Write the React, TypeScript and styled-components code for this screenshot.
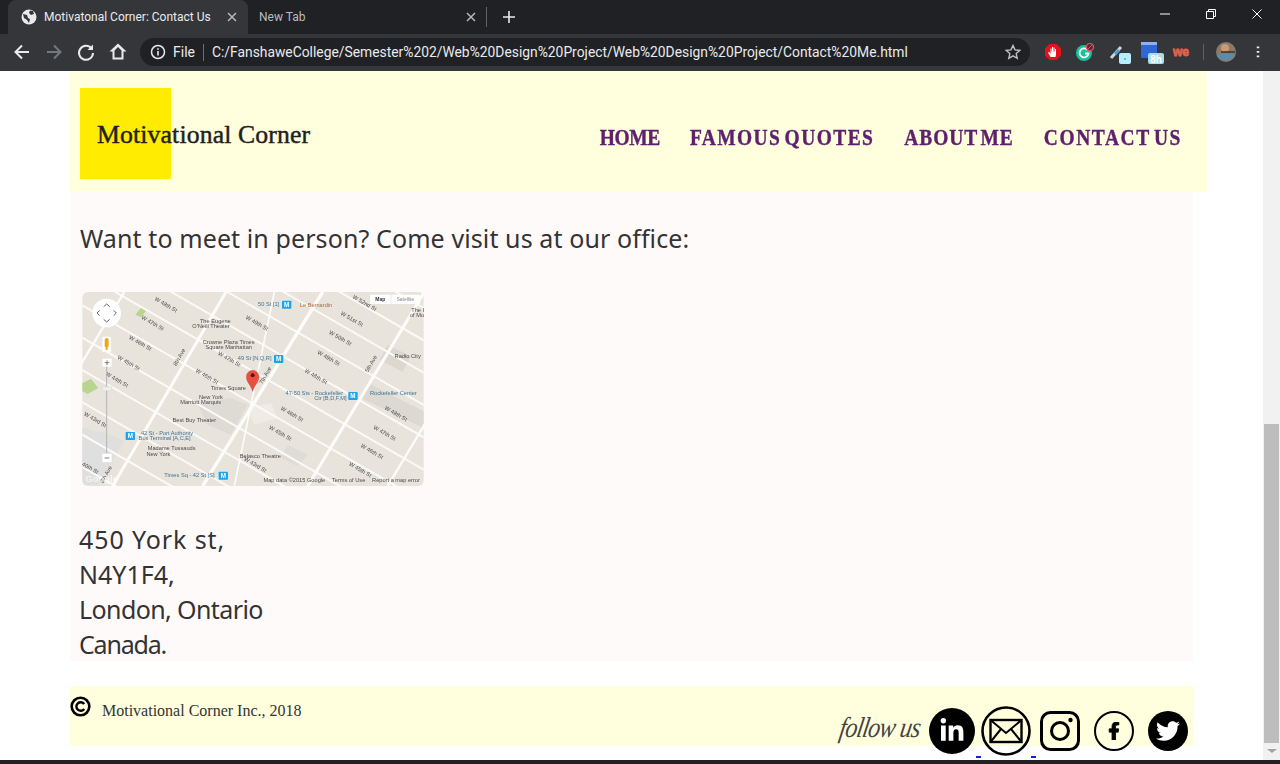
import React from "react";
import styled, { createGlobalStyle } from "styled-components";
import { FaLinkedinIn, FaFacebookF, FaTwitter } from "react-icons/fa";

const Global = createGlobalStyle`
  html, body { margin: 0; padding: 0; height: 100%; overflow: hidden; background: #fff; }
  #root { height: 764px; width: 1280px; }
  * { box-sizing: border-box; }
`;

const Page = styled.div`
  width: 1280px; height: 764px; display: flex; flex-direction: column; overflow: hidden;
`;
const TabStrip = styled.div`
  height: 34px; background: #202124; display: flex; align-items: flex-end; padding-left: 8px; flex: none;
  font: 12px "Roboto", "Liberation Sans", sans-serif;
`;
const ActiveTab = styled.div`
  width: 240px; height: 34px; background: #35363a; border-radius: 8px 8px 0 0; color: #e8eaed;
  display: flex; align-items: center; padding-left: 13px; gap: 7px;
`;
const InactiveTab = styled.div`
  width: 238px; height: 34px; color: #b9bcc0; display: flex; align-items: center; padding-left: 11px;
`;
const TabTitle = styled.span`
  flex: 1; white-space: nowrap;
`;
const TabClose = styled.svg<{ $mr: number }>`
  width: 10px; height: 10px; margin-right: ${p => p.$mr}px; flex: none;
`;
const TabDivider = styled.div`
  width: 1px; height: 20px; background: #5f6368; margin: 0 0 7px 0;
`;
const NewTab = styled.svg`
  width: 12px; height: 12px; margin: 0 0 11px 16px;
`;
const WindowControls = styled.div`
  margin-left: auto; display: flex; align-items: center; height: 34px; padding: 0 18px 6px 0; gap: 36px;
`;
const Toolbar = styled.div`
  height: 37px; background: #35363a; display: flex; align-items: center; flex: none; padding-bottom: 1px;
`;
const NavIcon = styled.svg<{ $ml: number }>`
  width: 20px; height: 20px; margin-left: ${p => p.$ml}px; flex: none;
`;
const Omnibox = styled.div`
  width: 890px; height: 28px; border-radius: 14px; background: #202124; margin-left: 12px;
  display: flex; align-items: center; padding-left: 10px; color: #e8eaed;
  font: 14px "Roboto", "Liberation Sans", sans-serif; flex: none;
`;
const FileLabel = styled.span`
  margin-left: 7px; color: #e8eaed;
`;
const OmniDivider = styled.div`
  width: 1px; height: 17px; background: #6b6e72; margin: 0 8px;
`;
const Url = styled.span`
  flex: 1; white-space: nowrap; font-size: 13.85px;
`;
const StarIcon = styled.svg`
  width: 16px; height: 16px; flex: none; margin-right: 9px;
`;
const InfoIcon = styled.svg`
  width: 16px; height: 16px; flex: none;
`;
const FaviconIcon = styled.svg`
  width: 16px; height: 16px; flex: none;
`;
const ExtIcon = styled.svg<{ $ml: number }>`
  width: 24px; height: 24px; margin-left: ${p => p.$ml}px; flex: none;
`;
const ToolbarDivider = styled.div`
  width: 1px; height: 16px; background: #5f6368; margin-left: 10px;
`;
const Viewport = styled.div`
  height: 689px; display: flex; flex: none; overflow: hidden; background: #fff;
`;
const Content = styled.div`
  width: 1263px; padding-left: 70px; flex: none; overflow: hidden;
`;
const Header = styled.header`
  width: 1137px; height: 121px; background: #ffffdd; display: flex; align-items: flex-start;
  justify-content: space-between; padding: 17px 25px 0 10px;
`;
const Logo = styled.div`
  width: 91px; height: 91px; background: #ffec00; display: flex; align-items: center; padding: 2px 0 0 17px;
  font: 400 25.7px "Liberation Serif", serif; color: #1f1f1f; white-space: nowrap; -webkit-text-stroke: 0.45px #1f1f1f;
  letter-spacing: 0.15px;
`;
const NavBar = styled.nav`
  display: flex; gap: 30px; margin-top: 37px;
`;
const NavLink = styled.a<{ $ls: number }>`
  font: 700 19.5px/26px "Liberation Serif", serif; color: #5e1f6e; white-space: nowrap;
  letter-spacing: ${p => p.$ls}px; word-spacing: -3px; transform: scaleY(1.2);
  -webkit-text-stroke: 0.35px #5e1f6e;
`;
const Main = styled.main`
  width: 1123px; height: 469px; background: #fffafa; padding: 28px 0 0 10px; color: #333;
  font-family: "Noto Sans", "Open Sans", sans-serif; font-size: 25px;
`;
const Lead = styled.p`
  margin: 0; line-height: 36px; white-space: nowrap; letter-spacing: 0.1px;
`;
const MapFrame = styled.div`
  width: 342px; height: 194px; margin: 36px 0 0 2px; border-radius: 6px; overflow: hidden;
  svg { display: block; filter: blur(0.35px); }
`;
const Address = styled.address`
  margin: 36px 0 0 -1px; font-style: normal; line-height: 35px;
`;
const AddressLine = styled.div<{ $ls: number }>`
  white-space: nowrap; letter-spacing: ${p => p.$ls}px;
`;
const Footer = styled.footer`
  width: 1124px; height: 60px; margin-top: 25px; background: #ffffdd; display: flex;
  justify-content: space-between; align-items: flex-start;
`;
const Copy = styled.div`
  display: flex; align-items: flex-start; color: #333; font: 16px/18px "Liberation Serif", serif;
`;
const CopySign = styled.svg`
  width: 21px; height: 21px; margin-top: 10px; flex: none;
`;
const CopyText = styled.span`
  margin: 16px 0 0 11px;
`;
const Social = styled.div`
  display: flex; align-items: center; height: 46px; margin: 22px 6px 0 0;
`;
const Follow = styled.span`
  font: italic 24px/30px "Liberation Serif", serif; color: #444; margin: -8px 9px 0 0; letter-spacing: -0.8px;
  transform: skewX(-10deg) scaleY(1.2); white-space: nowrap;
`;
const Round = styled.a<{ $size: number; $ml: number }>`
  width: ${p => p.$size}px; height: ${p => p.$size}px; border-radius: 50%; background: #000; color: #fff;
  display: flex; align-items: center; justify-content: center; margin-left: ${p => p.$ml}px; flex: none;
`;
const RoundOutline = styled(Round)`
  background: transparent; color: #000; border: 2px solid #000;
  svg { stroke: #000; stroke-width: 24px; }
`;
const Plain = styled.svg<{ $size: number; $ml: number }>`
  width: ${p => p.$size}px; height: ${p => p.$size}px; margin-left: ${p => p.$ml}px; flex: none; display: block;
`;
const LinkMarks = styled.div`
  display: flex; height: 2px; margin: 10px 0 0 906px; gap: 50px;
  i { display: block; width: 5px; height: 2px; background: #1a1aee; }
`;
const ScrollBar = styled.div`
  width: 17px; flex: none; background: #f1f1f1; display: flex; flex-direction: column;
`;
const ScrollThumb = styled.div`
  width: 15px; height: 319px; margin: 353px 0 0 1px; background: #bdbdbd;
`;
const ScrollArrow = styled.div`
  width: 0; height: 0; margin: 6px 0 0 4px; border-left: 5px solid transparent; border-right: 5px solid transparent;
  border-top: 4px solid #a3a3a3;
`;
const BottomBar = styled.div`
  height: 4px; background: #202124; flex: none;
`;

const avenues: [number, number, number][] = [
  [-199, 150, 7], [115, 455, 9], [385, 745, 10], [700, 1050, 9], [940, 1290, 7], [480, 600, 5],
];
const streets = Array.from({ length: 15 }, (_, i) => -520 + i * 97);

const labels: [string, number, number, number?][] = [
  ["W 48th St", 272, 65, 30], ["W 47th St", 232, 120, 30], ["W 46th St", 195, 180, 30], ["W 45th St", 160, 240, 30],
  ["W 44th St", 125, 290, 30], ["W 43rd St", 60, 410, 30], ["W 52nd St", 868, 60, 30], ["W 51st St", 830, 108, 30],
  ["W 50th St", 795, 165, 30], ["W 49th St", 760, 225, 30], ["W 48th St", 722, 280, 30], ["W 49th St", 545, 120, 30],
  ["W 47th St", 462, 228, 30], ["W 46th St", 395, 280, 30], ["W 46th St", 650, 393, 30], ["W 45th St", 615, 450, 30],
  ["W 48th St", 962, 392, 30], ["W 47th St", 928, 450, 30], ["W 46th St", 890, 505, 30], ["W 45th St", 855, 560, 30],
  ["W 43rd St", 540, 545, 30], ["8th Ave", 320, 220, -60], ["7th Ave", 578, 275, -60], ["5th Ave", 895, 240, -60],
  ["40th St", 45, 555, 30], ["8th Ave", 100, 572, -60],
  ["The Eugene", 423, 115], ["O'Neill Theater", 410, 131], ["Crowne Plaza Times", 463, 177], ["Square Manhattan", 463, 193],
  ["Times Square", 462, 317], ["New York", 410, 343], ["Marriott Marquis", 379, 358], ["Best Buy Theater", 360, 413],
  ["Madame Tussauds", 292, 497], ["New York", 252, 513], ["Belasco Theatre", 558, 521], ["Radio City", 1000, 221],
  ["The I", 1030, 83], ["of Mo", 1028, 97], ["Map data ©2015 Google", 660, 593], ["Terms of Use", 823, 593], ["Report a map error", 965, 593],
];
const blueLabels: [string, number, number][] = [
  ["50 St [1]", 583, 64], ["49 St [N,Q,R]", 541, 227], ["47-50 Sts - Rockefeller", 720, 330], ["Ctr [B,D,F,M]", 768, 346],
  ["Rockefeller Center", 957, 331], ["42 St - Port Authority", 278, 451], ["Bus Terminal [A,C,E]", 271, 467], ["Times Sq - 42 St [S]", 345, 578],
];
const metro: [number, number][] = [[637, 60], [613, 223], [836, 334], [168, 454], [447, 573]];

function MapArt() {
  return (
    <svg width="342" height="194" viewBox="24 22 1024 582">
      <rect x="24" y="22" width="1024" height="582" fill="#e8e4dc" />
      <polygon points="24,430 110,450 150,470 70,600 24,600" fill="#dfdfdf" />
      <polygon points="200,70 215,78 200,98 183,90" fill="#b6d58e" />
      <polygon points="24,295 50,283 72,310 40,328 24,320" fill="#b6d58e" />
      <polygon points="520,370 590,355 610,400 540,420" fill="#efece6" />
      <polygon points="940,180 1010,215 985,262 915,225" fill="#dcd8d0" />
      <polygon points="880,295 1048,380 1048,430 860,340" fill="#dcd9d2" />
      <polygon points="370,360 470,340 520,360 470,450 400,420" fill="#dedbd4" />
      <polygon points="640,480 700,510 670,545 620,520" fill="#dfdcd5" />
      {streets.map(y => (
        <line key={y} x1="24" y1={y} x2="1048" y2={y + 590} stroke="#fbfaf7" strokeWidth="6" />
      ))}
      {avenues.map(([a, b, w]) => (
        <line key={a} x1={a} y1="604" x2={b} y2="22" stroke="#fdfcfa" strokeWidth={w} />
      ))}
      <g fontFamily="Liberation Sans, sans-serif" fontSize="17" fill="#4a4a48" textAnchor="middle">
        {labels.map(([t, x, y, r], i) => (
          <text key={i} x={x} y={y} transform={r ? `rotate(${r} ${x} ${y})` : undefined}>{t}</text>
        ))}
      </g>
      <g fontFamily="Liberation Sans, sans-serif" fontSize="17" fill="#3f7396" textAnchor="middle">
        {blueLabels.map(([t, x, y], i) => <text key={i} x={x} y={y}>{t}</text>)}
      </g>
      <text x="725" y="68" fontFamily="Liberation Sans, sans-serif" fontSize="17" fill="#b06a3c" textAnchor="middle">Le Bernardin</text>
      {metro.map(([x, y], i) => (
        <g key={i}>
          <rect x={x - 14} y={y - 12} width="28" height="24" rx="2" fill="#1aa6ee" />
          <text x={x} y={y + 7} fontSize="19" fontWeight="700" fill="#fff" textAnchor="middle" fontFamily="Liberation Sans, sans-serif">M</text>
        </g>
      ))}
      <path d="M535 320c-6-20-19-28-19-44a19 19 0 0 1 38 0c0 16-13 24-19 44z" fill="#e8503f" stroke="#b8372a" strokeWidth="1" />
      <circle cx="535" cy="272" r="6" fill="#5a1410" />
      <circle cx="97" cy="85" r="43" fill="#fff" />
      <path d="M88 66l9-8 9 8M88 104l9 8 9-8M76 77l-8 8 8 8M118 77l8 8-8 8" fill="none" stroke="#666" strokeWidth="3" />
      <rect x="84" y="156" width="26" height="46" rx="3" fill="#fff" />
      <path d="M91 166a6 6 0 0 1 12 0v20h-3v10h-6v-10h-3z" fill="#eda51d" />
      <rect x="84" y="222" width="28" height="24" rx="2" fill="#fff" />
      <path d="M91 234h14M98 227v14" stroke="#666" strokeWidth="2.5" />
      <line x1="97" y1="246" x2="97" y2="506" stroke="#b5b5b5" strokeWidth="3" />
      <rect x="84" y="306" width="28" height="12" rx="2" fill="#efefef" stroke="#ccc" />
      <rect x="84" y="507" width="28" height="26" rx="2" fill="#fff" />
      <path d="M91 520h14" stroke="#666" strokeWidth="2.5" />
      <rect x="887" y="30" width="150" height="28" rx="2" fill="#fff" />
      <line x1="950" y1="30" x2="950" y2="58" stroke="#ddd" strokeWidth="2" />
      <text x="918" y="50" fontSize="15" fontWeight="700" fill="#333" textAnchor="middle" fontFamily="Liberation Sans, sans-serif">Map</text>
      <text x="993" y="50" fontSize="15" fill="#888" textAnchor="middle" fontFamily="Liberation Sans, sans-serif">Satellite</text>
      <text x="82" y="592" fontSize="28" fontWeight="700" fill="#fff" fillOpacity="0.65" textAnchor="middle" fontFamily="Liberation Sans, sans-serif">Google</text>
    </svg>
  );
}

const X = ({ mr }: { mr: number }) => (
  <TabClose $mr={mr} viewBox="0 0 10 10"><path d="M1 1l8 8M9 1l-8 8" stroke="#b5b8bc" strokeWidth="1.5" /></TabClose>
);

export default function App() {
  return (
    <Page>
      <Global />
      <TabStrip>
        <ActiveTab>
          <FaviconIcon viewBox="0 0 16 16">
            <circle cx="8" cy="8" r="7.5" fill="#e8eaed" />
            <path d="M2 5l4 1 1 3 2 1-1 4-2-3-3-2zM9 1.5l3 .5 1 3-3 1-2-2z" fill="#35363a" />
          </FaviconIcon>
          <TabTitle>Motivatonal Corner: Contact Us</TabTitle>
          <X mr={11} />
        </ActiveTab>
        <InactiveTab>
          <TabTitle>New Tab</TabTitle>
          <X mr={10} />
        </InactiveTab>
        <TabDivider />
        <NewTab viewBox="0 0 12 12"><path d="M6 0v12M0 6h12" stroke="#e8eaed" strokeWidth="1.6" /></NewTab>
        <WindowControls>
          <svg width="10" height="10" viewBox="0 0 10 10"><path d="M0 5h10" stroke="#fff" /></svg>
          <svg width="10" height="10" viewBox="0 0 10 10"><path d="M.5 2.5h7v7h-7zM2.5 2.5v-2h7v7h-2" fill="none" stroke="#fff" /></svg>
          <svg width="10" height="10" viewBox="0 0 10 10"><path d="M.5.5l9 9M9.500.5l-9 9" stroke="#fff" /></svg>
        </WindowControls>
      </TabStrip>
      <Toolbar>
        <NavIcon $ml={12} viewBox="0 0 20 20"><path d="M17 10H4M10 3.5L3.5 10l6.5 6.5" fill="none" stroke="#e8eaed" strokeWidth="2" /></NavIcon>
        <NavIcon $ml={12} viewBox="0 0 20 20"><path d="M3 10h13M10 3.5l6.5 6.5-6.5 6.5" fill="none" stroke="#74777b" strokeWidth="2" /></NavIcon>
        <NavIcon $ml={12} viewBox="0 0 20 20"><path d="M15.5 6.5A7 7 0 1 0 17 11" fill="none" stroke="#e8eaed" strokeWidth="2" /><path d="M17 2.500V8h-5.500z" fill="#e8eaed" /></NavIcon>
        <NavIcon $ml={12} viewBox="0 0 20 20"><path d="M10 1.500L1.500 9.500H4.500v8h11v-8h3zM6.500 15.500v-7L10 5l3.500 3.500v7z" fill="#e8eaed" fillRule="evenodd" /></NavIcon>
        <Omnibox>
          <InfoIcon viewBox="0 0 16 16">
            <circle cx="8" cy="8" r="6.5" fill="none" stroke="#e8eaed" strokeWidth="1.5" />
            <path d="M8 7v4.500M8 4.300v1.500" stroke="#e8eaed" strokeWidth="1.600" />
          </InfoIcon>
          <FileLabel>File</FileLabel>
          <OmniDivider />
          <Url>C:/FanshaweCollege/Semester%202/Web%20Design%20Project/Web%20Design%20Project/Contact%20Me.html</Url>
          <StarIcon viewBox="0 0 16 16">
            <path d="M8 1.500l2 4.400 4.800.5-3.600 3.200 1 4.700L8 11.900l-4.200 2.400 1-4.700L1.200 6.400l4.800-.5z" fill="none" stroke="#c0c2c5" strokeWidth="1.400" />
          </StarIcon>
        </Omnibox>
        <ExtIcon $ml={11} viewBox="0 0 24 24">
          <polygon points="8.500,4 15.500,4 20,8.500 20,15.500 15.500,20 8.500,20 4,15.500 4,8.500" fill="#e8101a" />
          <path d="M9.500 17L7 12.500l1-.5 1.500 1.500V8.500h1v3h.5V7h1v4.500h.5V7.500h1v4h.5V9h1v5.500L14.500 17z" fill="#fff" />
        </ExtIcon>
        <ExtIcon $ml={8} viewBox="0 0 24 24">
          <circle cx="11" cy="13" r="8" fill="#15c39a" />
          <path d="M14.500 10a4.500 4.500 0 1 0 1 3.500H12" fill="none" stroke="#fff" strokeWidth="1.800" />
          <circle cx="17" cy="7" r="3.500" fill="#35363a" stroke="#e8505b" strokeWidth="1.200" />
          <path d="M15 9l4-4" stroke="#e8505b" />
        </ExtIcon>
        <ExtIcon $ml={11} viewBox="0 0 24 24">
          <path d="M3 18L13 7" stroke="#cfd3d6" strokeWidth="3" />
          <path d="M7 14l4-4" stroke="#46a0d8" strokeWidth="3" />
          <rect x="11" y="13" width="12" height="11" rx="2" fill="#b5efff" />
          <path d="M16 19h2" stroke="#4a7d8a" />
        </ExtIcon>
        <ExtIcon $ml={8} viewBox="0 0 24 24">
          <rect x="1" y="2" width="16" height="16" rx="1" fill="#2f66d8" />
          <rect x="1" y="2" width="16" height="3" fill="#8fb0f0" />
          <rect x="8" y="13" width="16" height="11" rx="2" fill="#a9dde9" />
          <text x="16" y="22.500" fontSize="10" fontWeight="700" fill="#fff" textAnchor="middle" fontFamily="Liberation Sans, sans-serif">8h</text>
        </ExtIcon>
        <ExtIcon $ml={5} viewBox="0 0 24 24">
          <text x="12" y="15.500" fontSize="12" fontWeight="700" fill="#e8604a" stroke="#e8604a" strokeWidth="0.800" textAnchor="middle" fontFamily="Liberation Sans, sans-serif">we</text>
        </ExtIcon>
        <ToolbarDivider />
        <ExtIcon $ml={10} viewBox="0 0 24 24">
          <circle cx="12" cy="12" r="10" fill="#8a7a68" />
          <circle cx="11" cy="8" r="4" fill="#c99a7a" />
          <path d="M3 16c4 6 14 6 18 0l-4-2H7z" fill="#5d8ca8" />
          <path d="M7 12h14" stroke="#3a2f2a" strokeWidth="1.500" />
        </ExtIcon>
        <ExtIcon $ml={8} viewBox="0 0 24 24"><path d="M12 6.500v1.800M12 11v1.800M12 15.500v1.800" stroke="#e8eaed" strokeWidth="2.600" /></ExtIcon>
      </Toolbar>
      <Viewport>
        <Content>
          <Header>
            <Logo>Motivational Corner</Logo>
            <NavBar>
              <NavLink $ls={-0.4}>HOME</NavLink>
              <NavLink $ls={1.4}>FAMOUS QUOTES</NavLink>
              <NavLink $ls={0.9}>ABOUT ME</NavLink>
              <NavLink $ls={1.57}>CONTACT US</NavLink>
            </NavBar>
          </Header>
          <Main>
            <Lead>Want to meet in person? Come visit us at our office:</Lead>
            <MapFrame><MapArt /></MapFrame>
            <Address>
              <AddressLine $ls={0.9}>450 York st,</AddressLine>
              <AddressLine $ls={0}>N4Y1F4,</AddressLine>
              <AddressLine $ls={-0.6}>London, Ontario</AddressLine>
              <AddressLine $ls={-1.2}>Canada.</AddressLine>
            </Address>
          </Main>
          <Footer>
            <Copy>
              <CopySign viewBox="0 0 21 21">
                <circle cx="10.500" cy="10.500" r="8.800" fill="none" stroke="#000" strokeWidth="2.600" />
                <path d="M14.200 8a4.300 4.300 0 1 0 0 5" fill="none" stroke="#000" strokeWidth="2.400" />
              </CopySign>
              <CopyText>Motivational Corner Inc., 2018</CopyText>
            </Copy>
            <Social>
              <Follow>follow us</Follow>
              <Round $size={46} $ml={0}><FaLinkedinIn size={26} /></Round>
              <Plain $size={50} $ml={6} viewBox="0 0 50 50">
                <circle cx="25" cy="25" r="23.500" fill="none" stroke="#000" strokeWidth="2.600" />
                <rect x="9.500" y="14" width="31" height="22" fill="none" stroke="#000" strokeWidth="2.400" />
                <path d="M9.500 14L25 27l15.500-13M9.500 36L20 23M40.500 36L30 23" fill="none" stroke="#000" strokeWidth="2" />
              </Plain>
              <Plain $size={40} $ml={9} viewBox="0 0 40 40">
                <rect x="1.500" y="1.500" width="37" height="37" rx="9" fill="none" stroke="#000" strokeWidth="3" />
                <circle cx="20" cy="20" r="8.500" fill="none" stroke="#000" strokeWidth="3" />
                <circle cx="30.500" cy="9" r="2.200" fill="#000" />
              </Plain>
              <RoundOutline $size={40} $ml={14}><FaFacebookF size={18} /></RoundOutline>
              <Round $size={40} $ml={14}><FaTwitter size={24} /></Round>
            </Social>
          </Footer>
          <LinkMarks><i /><i /></LinkMarks>
        </Content>
        <ScrollBar>
          <ScrollThumb />
          <ScrollArrow />
        </ScrollBar>
      </Viewport>
      <BottomBar />
    </Page>
  );
}
